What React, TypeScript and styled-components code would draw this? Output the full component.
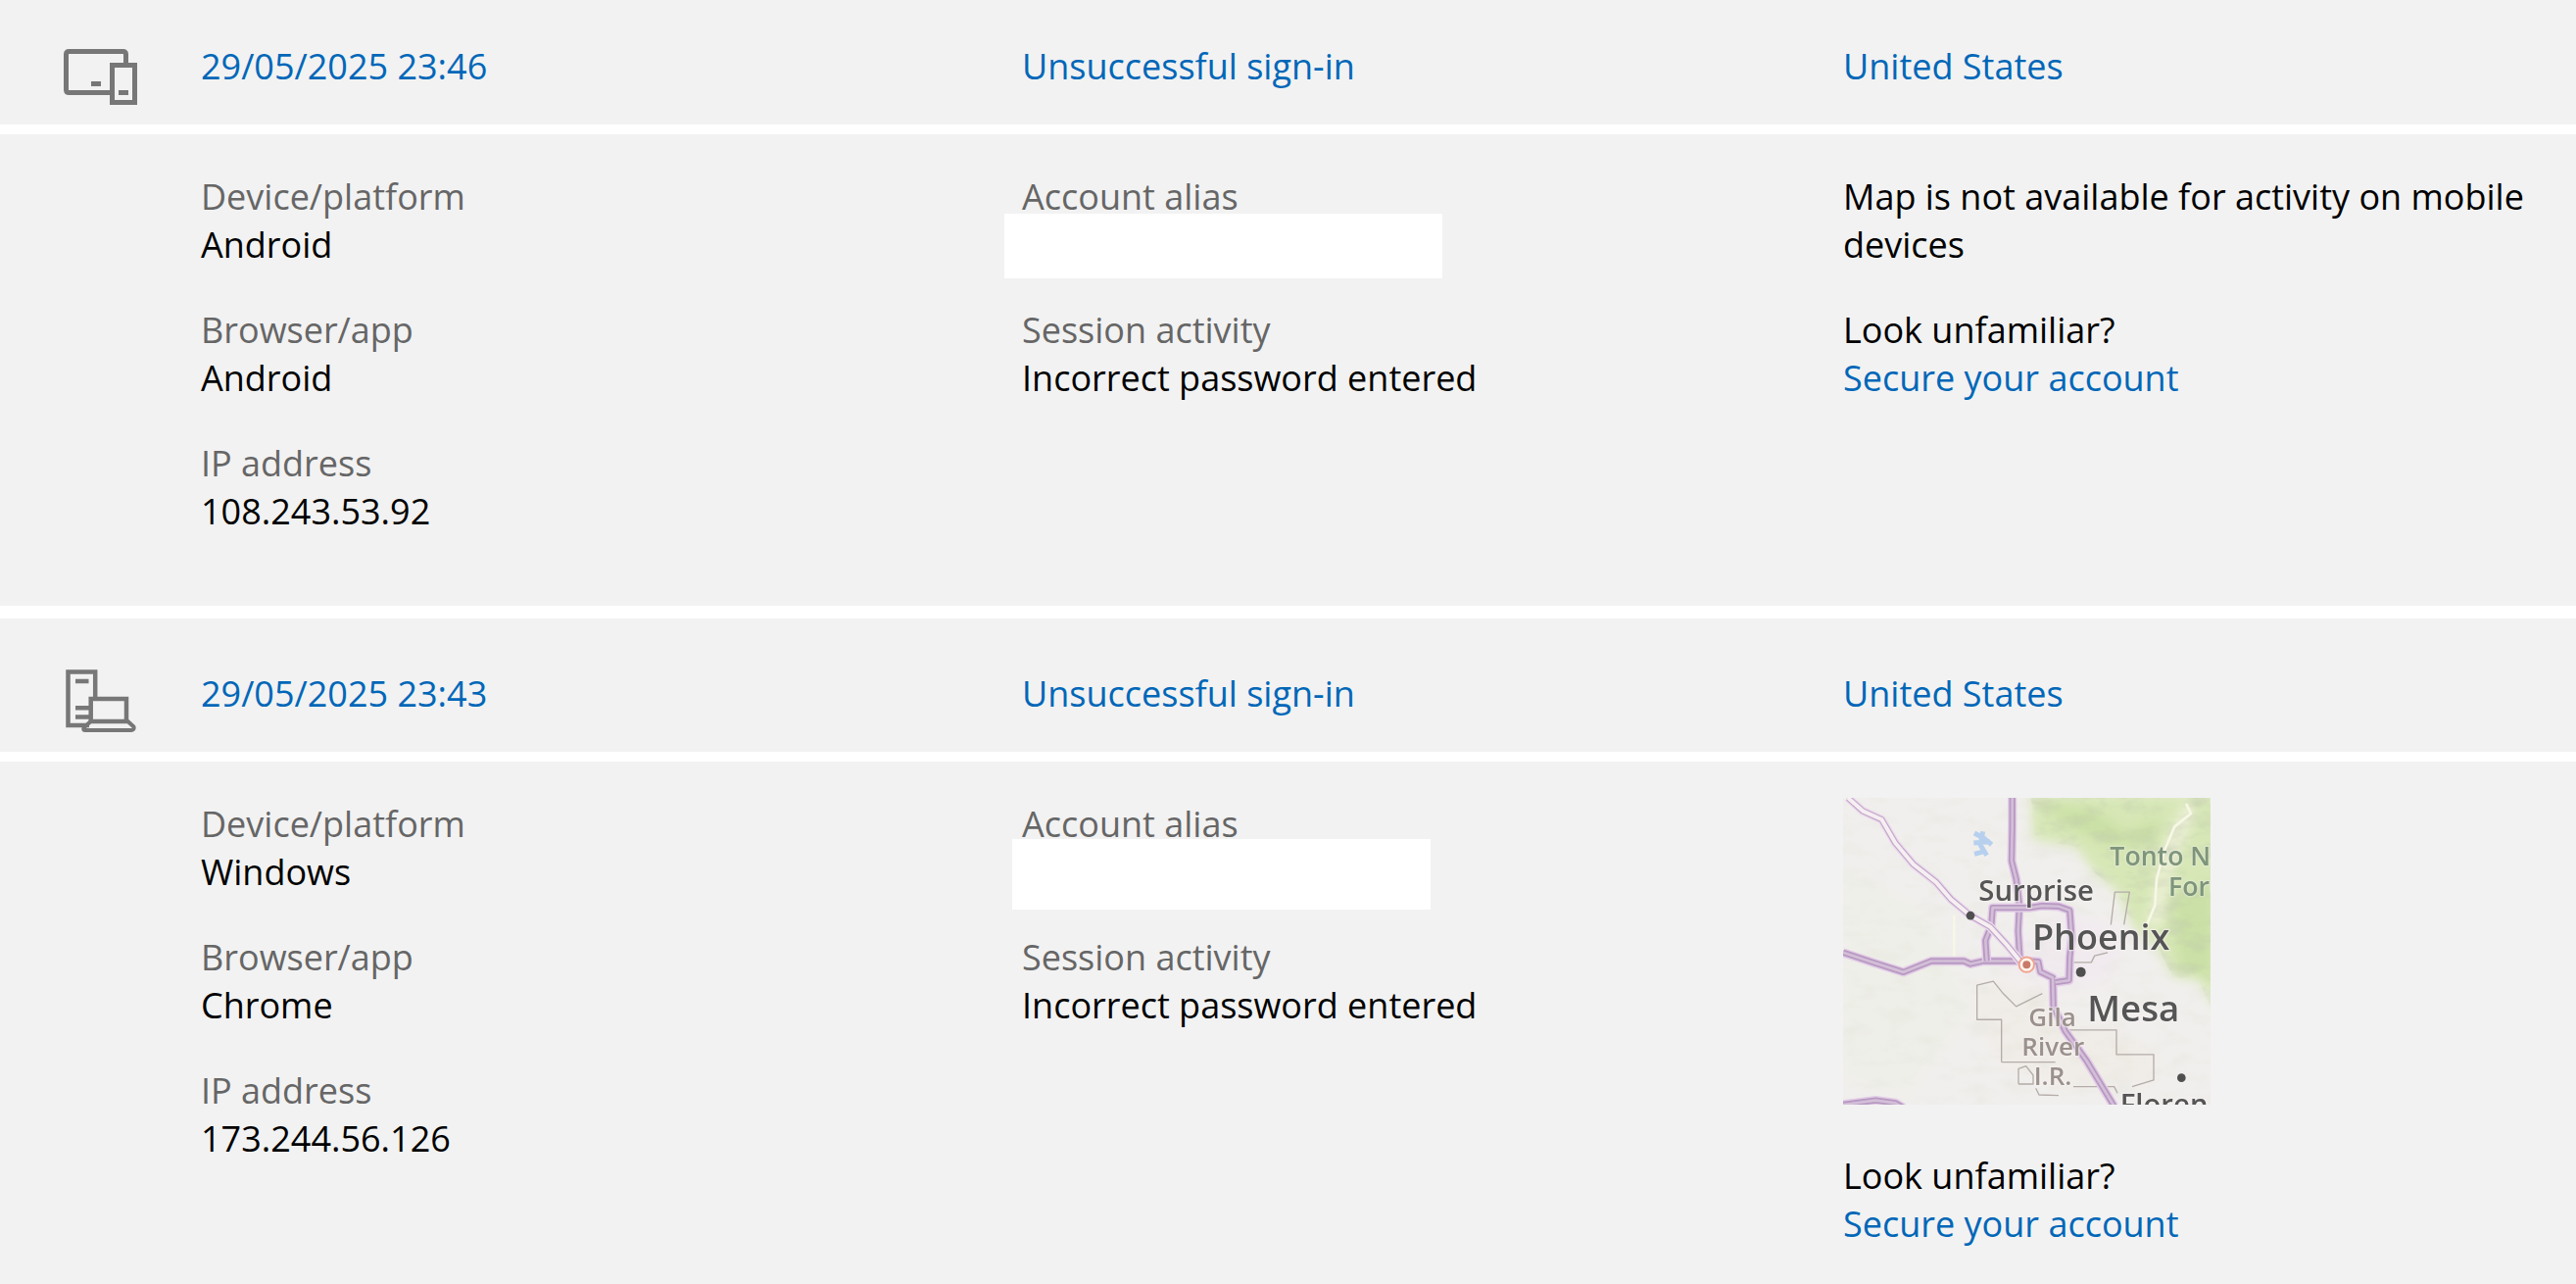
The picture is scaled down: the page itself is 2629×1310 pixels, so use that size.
import React from "react";
import styled, { createGlobalStyle } from "styled-components";

const GlobalStyle = createGlobalStyle`
  *, *::before, *::after { box-sizing: border-box; }
  body {
    margin: 0;
    background: #fff;
    color: #000;
    font-family: "Segoe UI", "Open Sans", "Noto Sans", sans-serif;
    font-size: 36px;
    line-height: 49px;
  }
`;

const ActivityList = styled.main`
  display: flex;
  flex-direction: column;
  gap: 13px;
`;

const Entry = styled.article`
  display: flex;
  flex-direction: column;
  gap: 10px;
`;

const Row = styled.div`
  display: grid;
  grid-template-columns: 205px 838fr 838fr 748fr;
  align-items: start;
  background: #f2f2f2;
`;

const Summary = styled(Row)<{ $first?: boolean }>`
  padding: ${(p) => (p.$first ? 43 : 52)}px 0 20px;
`;

const Details = styled(Row)<{ $last?: boolean }>`
  padding: 39px 0 ${(p) => (p.$last ? 37 : 72)}px;
`;

const Column = styled.div`
  display: flex;
  flex-direction: column;
  align-items: flex-start;
  gap: 38px;
  padding-right: 24px;
`;

const FieldList = styled.dl<{ $start?: boolean }>`
  display: flex;
  flex-direction: column;
  gap: 38px;
  margin: 0;
  grid-column-start: ${(p) => (p.$start ? 2 : "auto")};
`;

const Label = styled.dt`
  color: #666;
`;

const Value = styled.dd`
  position: relative;
  min-height: 49px;
  margin: 0;
`;

const Mask = styled.span<{ $wide?: boolean }>`
  position: absolute;
  top: ${(p) => (p.$wide ? -7 : -9)}px;
  left: ${(p) => (p.$wide ? -18 : -10)}px;
  width: ${(p) => (p.$wide ? 447 : 427)}px;
  height: ${(p) => (p.$wide ? 66 : 72)}px;
  background: #fff;
`;

const Paragraph = styled.p`
  margin: 0;
`;

const Link = styled.a`
  justify-self: start;
  color: #0067b8;
  text-decoration: none;

  &:hover {
    text-decoration: underline;
  }
`;

const DeviceIcon = styled.svg`
  display: block;
  width: 75px;
  height: 64px;
  margin-left: 65px;
  fill: none;
  stroke: #777;
  stroke-width: 5;
`;

const MapPicture = styled.svg`
  display: block;
  width: 375px;
  height: 313px;
  margin: -2px 0 10px;
`;

function MobileIcon() {
  return (
    <DeviceIcon viewBox="0 0 75 64" role="img" aria-label="Mobile device">
      <path d="M49 51.5H5.500Q2.500 51.500 2.500 48.500V12.500Q2.500 9.500 5.500 9.500H60.500Q63.500 9.500 63.500 12.500V23" />
      <path d="M49.500 23.500H72.500V61.500H49.500Z" />
      <path d="M28 42.500H38M56 51.500H66" />
    </DeviceIcon>
  );
}

function ComputerIcon() {
  return (
    <DeviceIcon viewBox="0 0 75 64" role="img" aria-label="Computer">
      <path strokeWidth="4.500" d="M26 57H4.500V2.500H32.200V28" />
      <path strokeWidth="4.500" d="M12 12H25.500M12 39.200H26M12 48.500H26" />
      <path strokeWidth="4.500" d="M27.700 53V30H64V53Z" />
      <path strokeWidth="4" strokeLinejoin="round" d="M27 53.500L20.500 59.500Q19.500 62 22 62H69Q72.500 61.500 71.500 58.500L65 52.500" />
    </DeviceIcon>
  );
}

function LocationMap() {
  const highways = [
    "M548 42L548 130L546 235L560 290L570 370L566 450L572 545",
    "M30 515L120 545L215 575L300 541L400 541L420 550L460 541L590 541L628 543L634 574L672 592L674 680L710 755L775 845L860 985",
    "M470 541L466 478L484 432L488 378L600 378L640 372L690 374L724 386L730 470L724 530L722 600L680 606",
    "M30 980L130 967L190 975L215 990",
  ];
  const diagonal = "M45 42L90 82L148 108L190 180L245 245L315 300L360 352L420 402L480 436L530 490L575 545";
  return (
    <MapPicture viewBox="30 42 1125 938" preserveAspectRatio="none" role="img" aria-label="Map of Phoenix, Arizona">
      <defs>
        <filter id="soft" x="-20%" y="-20%" width="140%" height="140%">
          <feGaussianBlur stdDeviation="18" />
        </filter>
        <filter id="ink">
          <feGaussianBlur stdDeviation="2" />
        </filter>
        <filter id="relief" x="0" y="0" width="100%" height="100%">
          <feTurbulence type="fractalNoise" baseFrequency="0.012 0.022" numOctaves="3" seed="8" />
          <feColorMatrix values="0 0 0 0 0.520  0 0 0 0 0.560  0 0 0 0 0.420  1.500 0 0 0 -0.680" />
        </filter>
        <clipPath id="forest">
          <path d="M605 42H1155V685L1120 600L1040 590L1000 510L920 440L870 330L800 270L740 190L620 170Z" />
        </clipPath>
      </defs>
      <rect x="30" y="42" width="1125" height="938" fill="#f1efed" />
      <g filter="url(#soft)">
        <path fill="#d7e7b6" d="M605 30H1180V700L1120 600L1040 590L1000 510L920 440L870 330L800 270L740 190L610 170Z" />
        <path fill="#cae0a6" d="M640 60L800 80L900 150L1000 100L980 180L850 190L720 130ZM1040 350L1160 300V600L1060 560Z" />
        <path fill="#edf0d8" d="M1080 50L1020 180L990 300L960 430L1000 440L1030 280L1110 80Z" />
        <path fill="#f1ebef" d="M480 540L700 380L900 450L850 600L700 640Z" />
        <path fill="#efefe9" d="M30 250L300 400L420 700L220 950L30 900Z" />
        <path fill="#f0ece7" d="M440 610L520 620L640 650L720 750L860 755L980 830L970 910L740 925L520 850L440 720Z" />
      </g>
      <rect x="30" y="42" width="1125" height="938" filter="url(#relief)" opacity="0.160" />
      <g clipPath="url(#forest)">
        <rect x="600" y="42" width="555" height="643" filter="url(#relief)" opacity="0.600" />
      </g>
      <g filter="url(#ink)" fill="none" strokeLinejoin="round">
        <path stroke="#f7f7e6" strokeWidth="8" d="M1080 60L1095 90L1045 130L1015 200L990 290L985 370L960 430M370 400V530" />
        <path stroke="#a8c8ef" strokeWidth="15" d="M432 150L460 165L485 185M458 145L450 185L470 218M430 180L480 176M432 214L465 205" opacity="0.800" />
        <path
          stroke="#b4aca8"
          strokeWidth="4"
          d="M515 850V720H440V615L490 603L520 640L560 680L640 640M700 752H867V827H981V905L915 925M515 850H680M735 925H860L870 945M567 917V870L590 862L612 890V917H567M850 430L862 330H907L890 430M730 545H790L800 525L840 515M620 930L630 950L690 952"
        />
        {highways.map((d) => (
          <React.Fragment key={d}>
            <path d={d} stroke="#e3cee7" strokeWidth="28" />
            <path d={d} stroke="#b899c2" strokeWidth="19" />
            <path d={d} stroke="#d3bfd8" strokeWidth="8" />
          </React.Fragment>
        ))}
        <path d={diagonal} stroke="#eadcec" strokeWidth="27" />
        <path d={diagonal} stroke="#c3a5ca" strokeWidth="19" />
        <path d={diagonal} stroke="#f6eff2" strokeWidth="12" />
        <circle cx="592" cy="552" r="23" fill="#fff6ee" stroke="#f0a491" strokeWidth="6" />
        <circle cx="592" cy="552" r="12" fill="#c97a6b" />
        <g fill="#505050">
          <circle cx="420" cy="402" r="13" />
          <circle cx="758" cy="575" r="15" />
          <circle cx="1066" cy="898" r="13" />
        </g>
      </g>
      <g
        filter="url(#ink)"
        fontFamily='"Segoe UI", "Open Sans", "Noto Sans", sans-serif'
        fontWeight="600"
        stroke="#f6f2f2"
        strokeOpacity="0.600"
        strokeWidth="8"
        strokeLinejoin="round"
        paintOrder="stroke"
      >
        <g fill="#555">
          <text x="445" y="356" fontSize="88">Surprise</text>
          <text x="609" y="506" fontSize="108">Phoenix</text>
          <text x="778" y="724" fontSize="110">Mesa</text>
          <text x="878" y="1010" fontSize="88">Floren</text>
        </g>
        <g fill="#9a918c" fontSize="78">
          <text x="598" y="740">Gila</text>
          <text x="577" y="830">River</text>
          <text x="614" y="920">I.R.</text>
        </g>
        <g fill="#7e957c" fontSize="80" strokeOpacity="0.300">
          <text x="847" y="250">Tonto N</text>
          <text x="1026" y="342">Fore</text>
        </g>
      </g>
    </MapPicture>
  );
}

interface FieldProps {
  label: string;
  children: React.ReactNode;
}

function Field({ label, children }: FieldProps) {
  return (
    <div>
      <Label>{label}</Label>
      <Value>{children}</Value>
    </div>
  );
}

interface Activity {
  kind: "mobile" | "computer";
  time: string;
  platform: string;
  browser: string;
  ip: string;
}

const activities: Activity[] = [
  { kind: "mobile", time: "29/05/2025 23:46", platform: "Android", browser: "Android", ip: "108.243.53.92" },
  { kind: "computer", time: "29/05/2025 23:43", platform: "Windows", browser: "Chrome", ip: "173.244.56.126" },
];

export default function App() {
  return (
    <>
      <GlobalStyle />
      <ActivityList>
        {activities.map((item, index) => {
          const mobile = item.kind === "mobile";
          return (
            <Entry key={item.time}>
              <Summary $first={index === 0}>
                {mobile ? <MobileIcon /> : <ComputerIcon />}
                <Link href="#">{item.time}</Link>
                <Link href="#">Unsuccessful sign-in</Link>
                <Link href="#">United States</Link>
              </Summary>
              <Details $last={index === activities.length - 1}>
                <FieldList $start>
                  <Field label="Device/platform">{item.platform}</Field>
                  <Field label="Browser/app">{item.browser}</Field>
                  <Field label="IP address">{item.ip}</Field>
                </FieldList>
                <FieldList>
                  <Field label="Account alias">
                    <Mask $wide={mobile} />
                  </Field>
                  <Field label="Session activity">Incorrect password entered</Field>
                </FieldList>
                <Column>
                  {mobile ? (
                    <Paragraph>Map is not available for activity on mobile devices</Paragraph>
                  ) : (
                    <LocationMap />
                  )}
                  <Paragraph>
                    Look unfamiliar?
                    <br />
                    <Link href="#">Secure your account</Link>
                  </Paragraph>
                </Column>
              </Details>
            </Entry>
          );
        })}
      </ActivityList>
    </>
  );
}
